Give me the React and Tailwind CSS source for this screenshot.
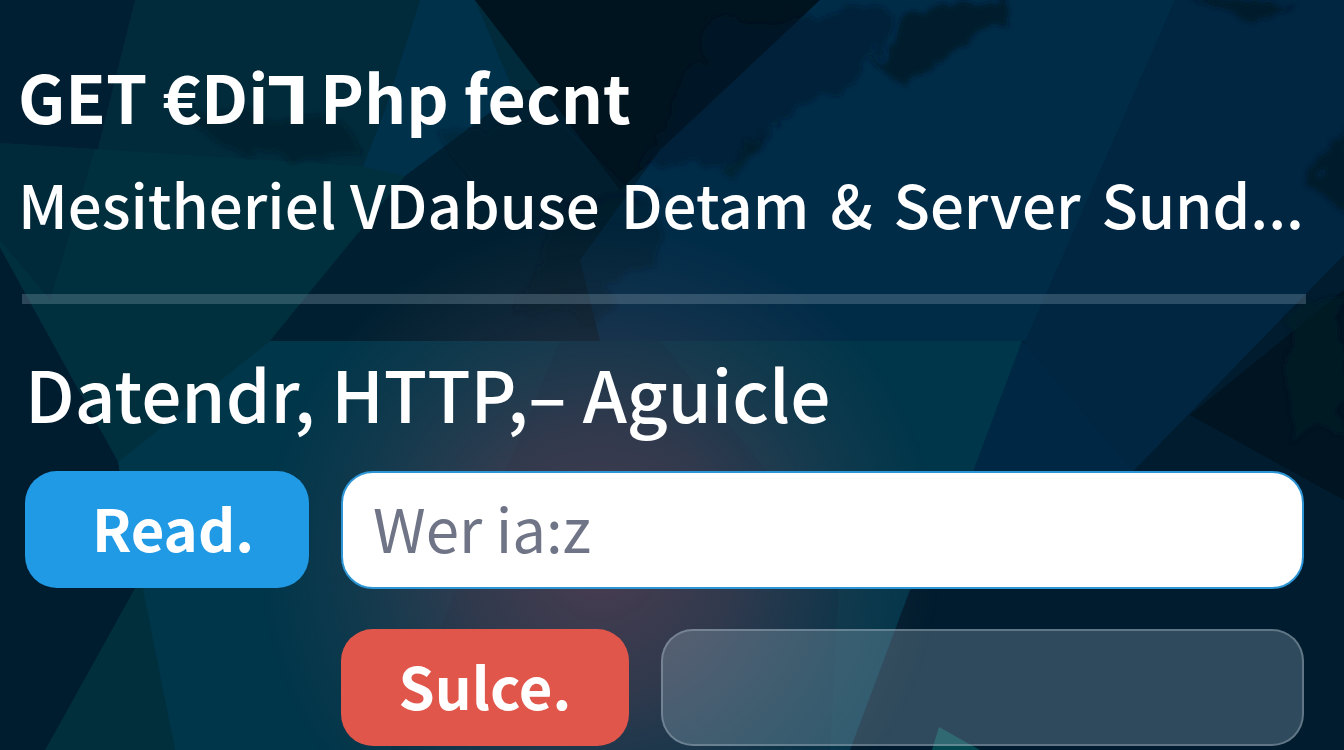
import React from "react";

function Backdrop() {
  return (
    <svg
      className="absolute inset-0 -z-10 h-full w-full"
      viewBox="0 0 1344 750"
      preserveAspectRatio="none"
      aria-hidden="true"
    >
      <defs>
        <radialGradient id="glow" gradientUnits="userSpaceOnUse" cx="600" cy="560" r="340">
          <stop offset="0" stopColor="#7c4457" stopOpacity="0.6" />
          <stop offset="0.4" stopColor="#6b4456" stopOpacity="0.45" />
          <stop offset="0.75" stopColor="#56485a" stopOpacity="0.18" />
          <stop offset="1" stopColor="#50485a" stopOpacity="0" />
        </radialGradient>
        <filter id="rough" x="-5%" y="-5%" width="110%" height="110%">
          <feTurbulence type="fractalNoise" baseFrequency="0.03" numOctaves="3" seed="4" />
          <feDisplacementMap in="SourceGraphic" scale="34" />
          <feGaussianBlur stdDeviation="2" />
        </filter>
      </defs>
      <rect width="1344" height="750" fill="#001f32" />

      {/* upper facets */}
      <polygon points="135,0 540,0 620,190 350,190 85,300 60,300" fill="#012b3b" />
      <polygon points="420,0 475,0 560,200 350,200 385,110" fill="#00314b" />
      <polygon points="0,143 360,166 405,176 270,341 1020,341 1020,750 45,750 135,588 118,462 0,248" fill="#00303e" />
      <polygon points="0,143 95,149 50,300 0,240" fill="#00293a" />
      <polygon points="405,176 520,90 580,90 740,270 700,341 270,341" fill="#002031" />
      <polygon points="475,0 820,0 620,190" fill="#001420" />
      <polygon points="820,0 1175,0 1035,341 600,341 580,260 660,150" fill="#002c48" />
      <polygon points="1175,0 1344,0 1344,255 1120,485 900,640 960,490" fill="#002641" />

      {/* lower facets */}
      <polygon points="270,341 1022,341 870,750 175,750 118,462" fill="#00364a" />
      <polygon points="0,248 118,462 135,588 45,750 0,750" fill="#001d30" />
      <polygon points="140,588 175,750 45,750" fill="#012f3b" />
      <polygon points="1022,341 1140,480 955,520" fill="#002845" />
      <polygon points="1344,255 1120,485 910,590 850,750 1344,750" fill="#001c2e" />
      <polygon points="1344,290 1190,415 1344,500" fill="#001422" />
      <polygon points="560,341 660,341 840,560 830,750 390,750" fill="#002c42" opacity="0.5" />
      <polygon points="939,727 980,750 932,750" fill="#04484f" />

      {/* coastline shadows */}
      <g filter="url(#rough)" fill="#001a28">
        <polygon points="910,10 1010,0 1010,15 960,50 905,85 870,60" opacity="0.8" />
        <polygon points="720,20 890,10 850,90 800,110 740,160 640,170" opacity="0.5" />
        <polygon points="170,110 340,120 360,150 250,160" opacity="0.45" />
        <polygon points="435,130 560,120 640,200 500,220" opacity="0.35" />
        <polygon points="560,200 660,190 660,250 600,310 520,320" opacity="0.4" />
        <polygon points="1190,0 1290,0 1250,20" opacity="0.8" />
        <polygon points="1344,125 1310,190 1344,210" opacity="0.8" />
        <polygon points="1344,290 1290,320 1285,370 1290,440 1344,430" opacity="0.6" />
        <polygon points="720,170 760,130 740,185" opacity="0.6" />
      </g>
      <rect width="1344" height="750" fill="url(#glow)" />
    </svg>
  );
}

export default function App() {
  return (
    <main className="relative isolate min-h-screen overflow-hidden pt-[55px] pb-1 font-['Noto_Sans_CJK_SC','DejaVu_Sans',sans-serif] text-white">
      <Backdrop />

      <header className="pr-10 pl-[18px]">
        <h1 className="text-[66px] leading-[80px] font-bold whitespace-nowrap">GET €Di⅂ Php fecnt</h1>
        <p className="mt-7 flex justify-between text-[60px] leading-[80px] font-medium whitespace-nowrap">
          <span>Mesitheriel VDabuse</span>
          <span>Detam</span>
          <span>&amp;</span>
          <span>Server</span>
          <span>Sund...</span>
        </p>
      </header>

      <hr className="mt-[51px] mr-[38px] ml-[22px] h-[10px] border-0 bg-[#8fa9b8]/30" />

      <form className="pr-10 pl-[25px]" onSubmit={(e) => e.preventDefault()}>
        <label htmlFor="query" className="mt-11 block text-[71px] leading-[88px] font-medium whitespace-nowrap">
          Datendr, HTTP,– Aguicle
        </label>
        <div className="mt-[35px] grid grid-cols-[284px_minmax(0,1fr)] gap-x-8 gap-y-10">
          <button type="button" className="h-[117px] rounded-[32px] bg-[#219ae6] pb-1.5 pl-3 text-[58px] leading-[80px] font-bold">
            Read.
          </button>
          <input
            id="query"
            type="text"
            placeholder="Wer ia:z"
            className="h-[118px] w-full min-w-0 rounded-[32px] border-2 border-[#2b95d6] bg-white px-[30px] pb-2 text-[60px] text-[#2e3d54] outline-none placeholder:text-[#6f7586]"
          />
          <div className="col-start-2 flex gap-8">
            <button type="button" className="h-[117px] w-[288px] shrink-0 rounded-[32px] bg-[#e1564b] pb-1.5 text-[58px] leading-[80px] font-bold">
              Sulce.
            </button>
            <input
              type="text"
              aria-label="Value"
              className="h-[117px] min-w-0 flex-1 rounded-[32px] border-2 border-[#a9bac5]/40 bg-[#9db6c6]/30 px-[30px] text-[60px] outline-none"
            />
          </div>
        </div>
      </form>
    </main>
  );
}
